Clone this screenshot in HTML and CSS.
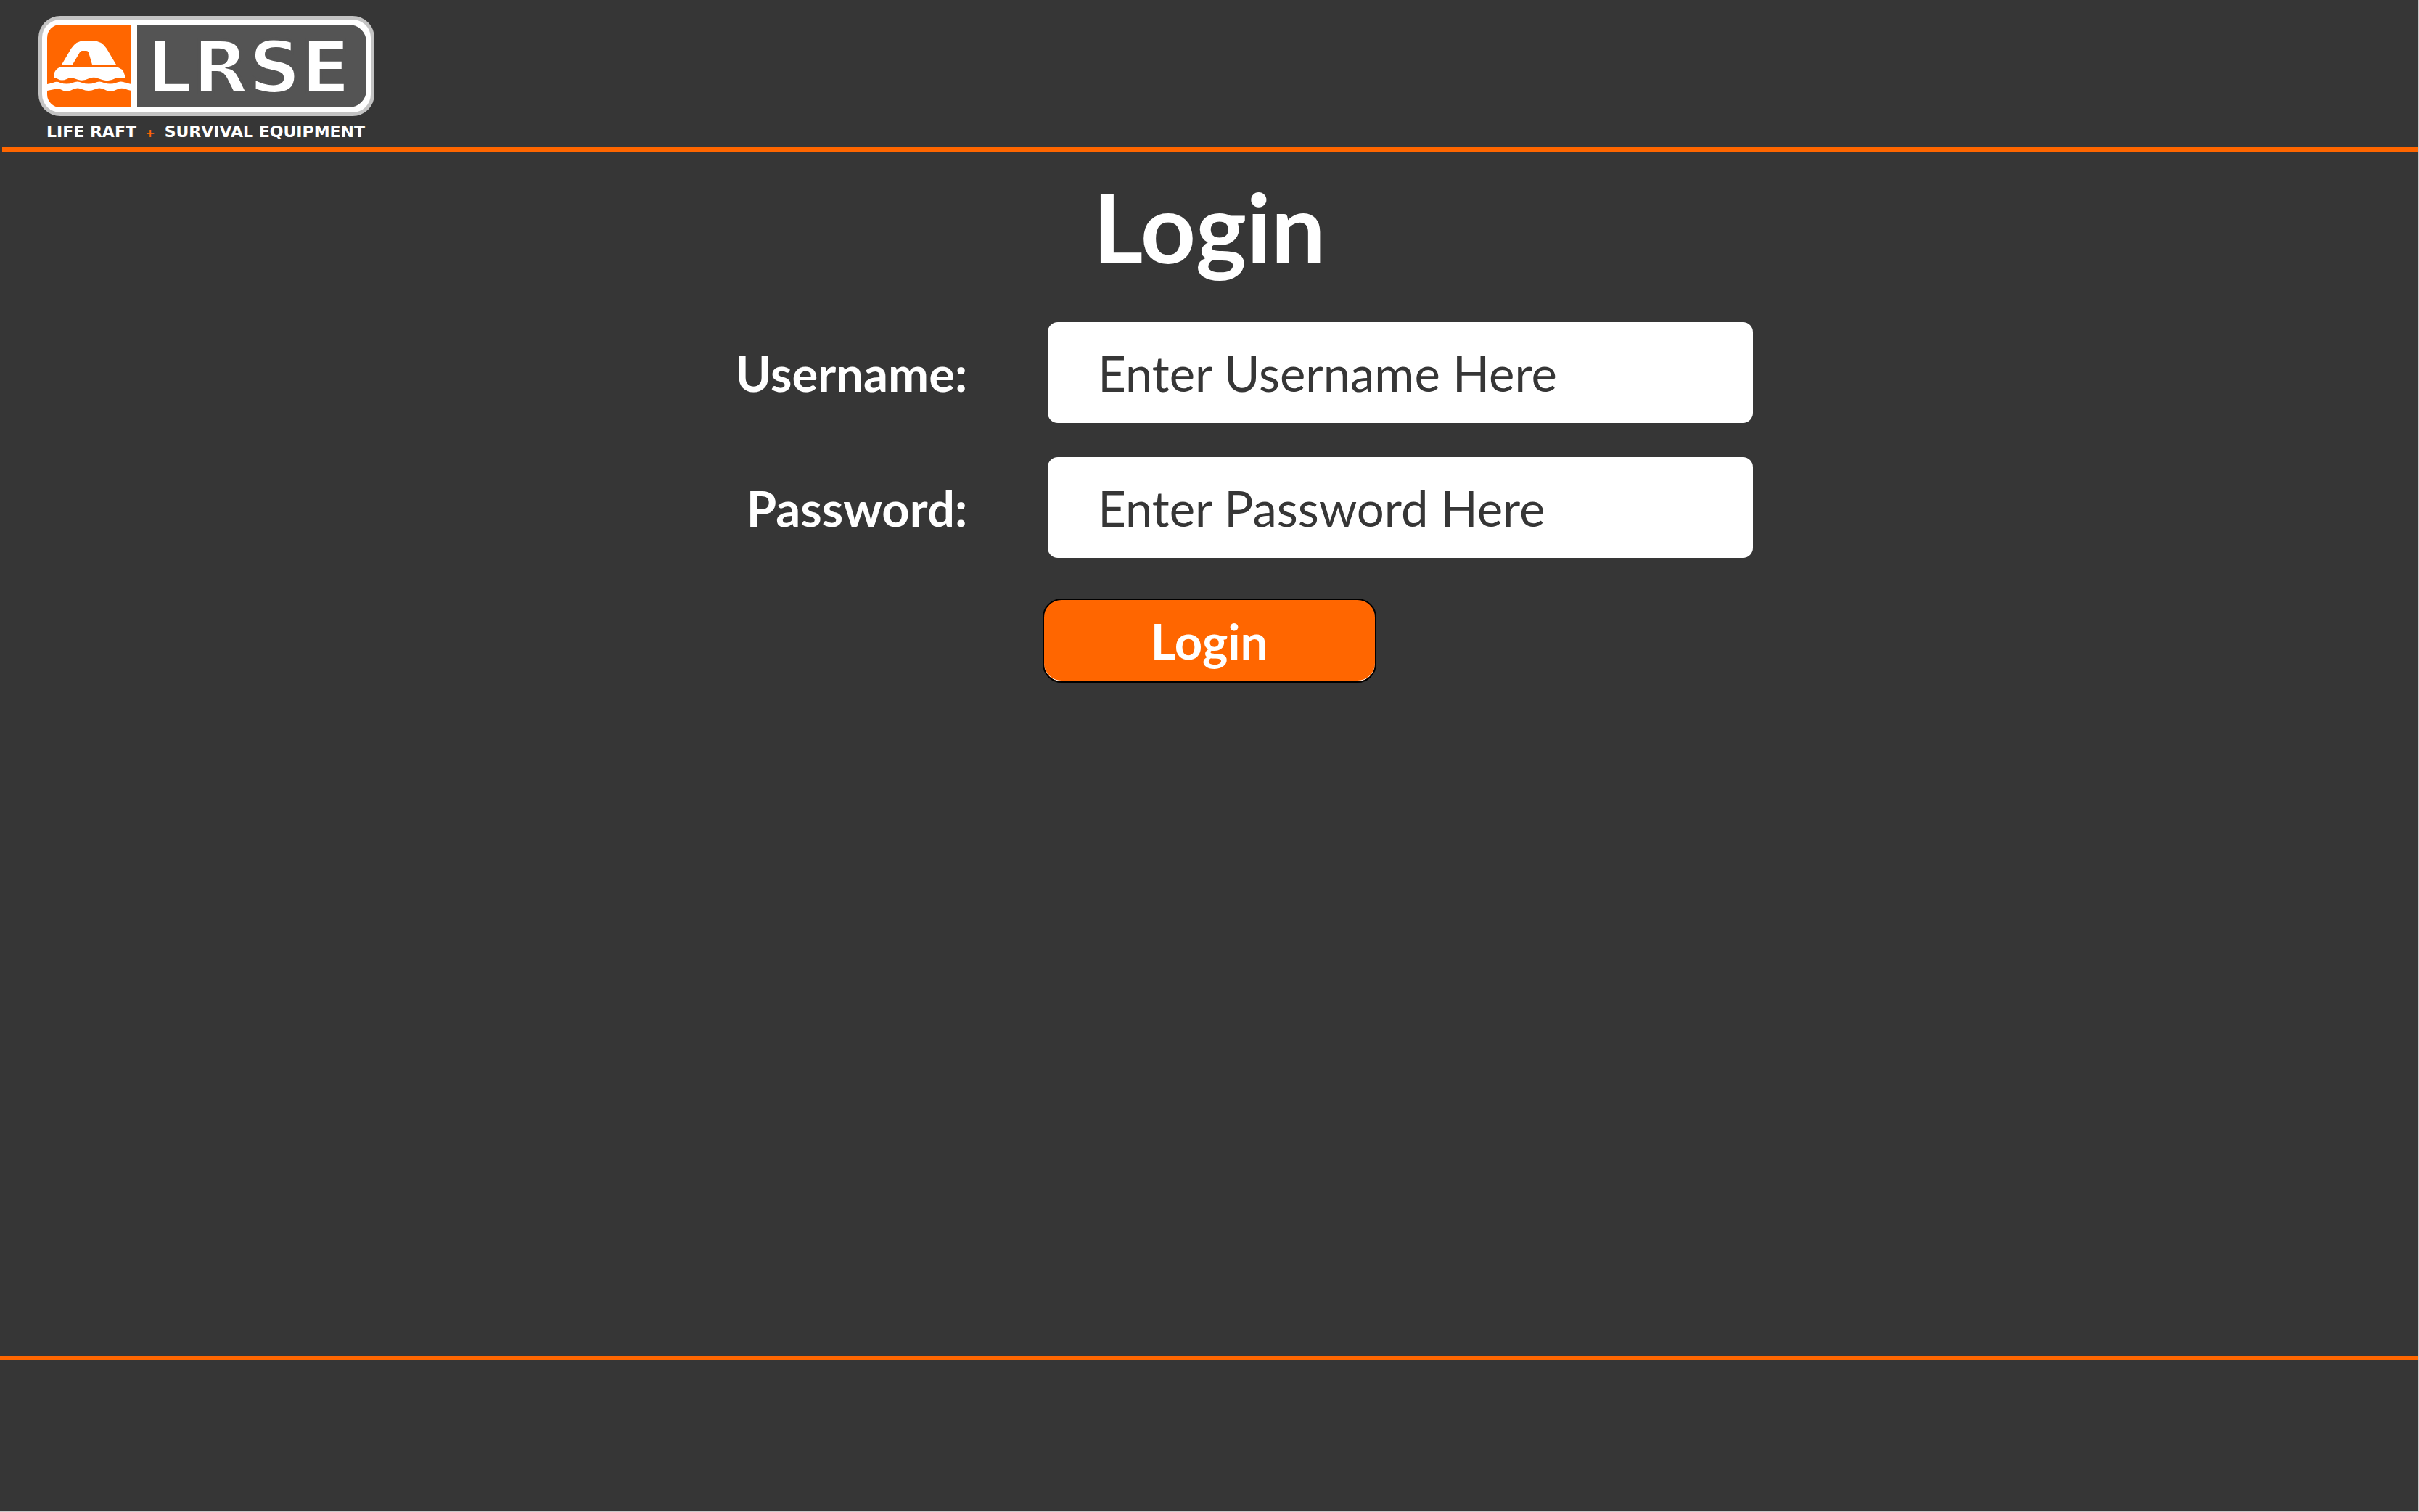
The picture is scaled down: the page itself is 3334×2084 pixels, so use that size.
FILE: index.html
```html
<!DOCTYPE html>
<html lang="en">
<head>
<meta charset="utf-8">
<meta name="viewport" content="width=device-width, initial-scale=1">
<title>LRSE Login</title>
<link rel="stylesheet" href="styles.css">
</head>
<body>
<header class="site-header">
  <svg class="logo" viewBox="0 0 463 181" role="img" aria-label="LRSE Life Raft + Survival Equipment">
    <rect class="logo-rim" x="0" y="0" width="463" height="138" rx="30"/>
    <rect class="logo-white" x="5" y="5" width="453" height="128" rx="25"/>
    <path class="logo-orange" d="M30 12H128V126H30A18 18 0 0 1 12 108V30A18 18 0 0 1 30 12Z"/>
    <path class="logo-panel" d="M136 12H428A24 24 0 0 1 452 36V102A24 24 0 0 1 428 126H136Z"/>
    <path class="logo-white" fill-rule="evenodd" d="M32 67L45 45Q52 34 64 34H74Q87 34 94 45L107 67H74L69 50Q68 48 66 48H60Q58 48 57 50L47 67Z"/>
    <path class="logo-white" d="M21 86V82Q23 70 35 70H105Q117 71 119 82V86Q112 84 106 86Q97 91 88 88L79 85Q75 84 70 86Q62 90 55 88L46 85Q42 85 39 87Q32 90 27 87Q24 85 21 86Z"/>
    <path class="logo-white" d="M12 94Q18 93 23 91Q26 90 30 92Q39 95 47 92Q54 89 60 92Q69 95 78 92Q84 89 90 92Q99 95 107 92Q114 89 120 92L128 94V103Q123 102 118 100Q113 99 109 101Q99 106 90 101Q84 98 78 101Q69 105 60 101Q54 98 48 101Q39 106 30 101Q26 99 22 101L12 103Z"/>
    <text class="logo-name" x="149" y="106">LRSE</text>
    <text class="logo-tag" x="11" y="167">LIFE RAFT</text>
    <text class="logo-tag logo-plus" x="154" y="167" text-anchor="middle">+</text>
    <text class="logo-tag" x="450" y="167" text-anchor="end">SURVIVAL EQUIPMENT</text>
  </svg>
</header>
<main class="login">
  <h1 class="login-title">Login</h1>
  <form class="login-form">
    <div class="field">
      <label class="field-label" for="username">Username:</label>
      <input class="field-input" id="username" name="username" type="text" placeholder="Enter Username Here">
    </div>
    <div class="field">
      <label class="field-label" for="password">Password:</label>
      <input class="field-input" id="password" name="password" type="password" placeholder="Enter Password Here">
    </div>
    <button class="login-button" type="submit">Login</button>
  </form>
</main>
<footer class="site-footer"></footer>
</body>
</html>
```
FILE: styles.css
```css
* {
  box-sizing: border-box;
}

body {
  display: flex;
  flex-direction: column;
  min-height: 100vh;
  margin: 0;
  border-right: 1px solid #c8c8c8;
  border-bottom: 1px solid #c8c8c8;
  background: #363636;
  color: #fff;
  font-family: Lato, sans-serif;
}

.site-header {
  margin-left: 3px;
  padding: 22px 50px 0;
  border-bottom: 6px solid #ff6600;
}

.logo {
  display: block;
  width: 463px;
  height: 181px;
}

.logo-rim {
  fill: #c3c3c3;
}

.logo-white {
  fill: #fff;
}

.logo-orange {
  fill: #ff6600;
}

.logo-panel {
  fill: #545454;
}

/* The panel-coloured outline thins the bold letters. */
.logo-name {
  fill: #fff;
  stroke: #545454;
  stroke-width: 4px;
  font: 700 100px "DejaVu Sans", sans-serif;
}

.logo-tag {
  fill: #fff;
  font: 700 22px "DejaVu Sans", sans-serif;
}

.logo-plus {
  fill: #ff6600;
  font-size: 16px;
}

.login {
  flex: 1;
  padding: 22px 0 48px;
}

.login-title {
  margin: 0 0 51px;
  font-size: 133px;
  font-weight: 700;
  line-height: 162px;
  text-align: center;
}

.login-form {
  display: flex;
  flex-direction: column;
  gap: 47px;
}

.field {
  display: grid;
  grid-template-columns: 40% minmax(0, 972px);
  align-items: center;
  column-gap: 111px;
}

.field-label {
  font-size: 67px;
  font-weight: 700;
  line-height: 80px;
  text-align: right;
}

.field-input {
  width: 100%;
  height: 139px;
  padding: 0 69px;
  border: 0;
  border-radius: 14px;
  background: #fff;
  color: #363636;
  font: 400 67px Lato, sans-serif;
}

.field-input::placeholder {
  color: #363636;
  opacity: 1;
}

.login-button {
  align-self: center;
  width: 460px;
  height: 116px;
  margin-top: 9px;
  padding: 0;
  border: 2px solid #000;
  border-radius: 26px;
  background: #ff6600;
  box-shadow: inset 0 -1px 0 #fff;
  color: #fff;
  font: 700 67px Lato, sans-serif;
}

.site-footer {
  min-height: 214px;
  border-top: 6px solid #ff6600;
}
```
